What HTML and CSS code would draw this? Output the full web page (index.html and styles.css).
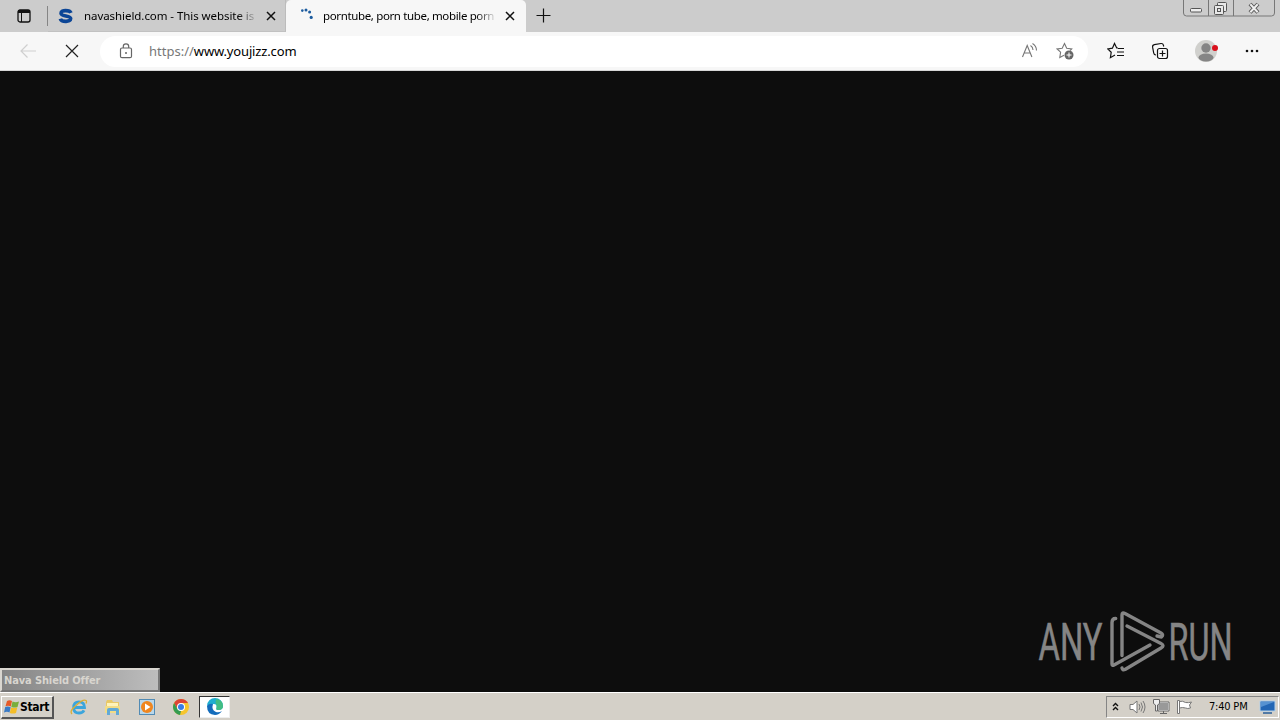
FILE: index.html
```html
<!DOCTYPE html>
<html lang="en">
<head>
<meta charset="utf-8">
<title>Desktop</title>
<link rel="stylesheet" href="styles.css">
</head>
<body>
<div class="screen">
  <header class="tabstrip">
    <svg class="tab-actions" width="16" height="16" viewBox="0 0 16 16"><rect x="2" y="2" width="12" height="12" rx="2" fill="none" stroke="#111" stroke-width="1.3"/><path d="M2 3.500h12" stroke="#111" stroke-width="3"/><path d="M5.500 5v9" stroke="#111"/></svg>
    <span class="divider"></span>
    <div class="tab">
      <svg class="fav" width="16" height="16" viewBox="0 0 16 16"><path d="M13 4.900C11.800 2 3 1.600 3 5.200c0 3.600 9.700 1.800 9.700 5.400 0 3.900-9.400 3.400-10.400.1" fill="none" stroke="#0b4596" stroke-width="3.600"/></svg>
      <span class="title t1">navashield.com - This website is</span>
      <svg class="close" width="10" height="10" viewBox="0 0 10 10"><path d="M1 1l8 8M9 1l-8 8" stroke="#111" stroke-width="1.5"/></svg>
    </div>
    <div class="tab active">
      <svg class="fav" width="16" height="16" viewBox="0 0 16 16" fill="#1c5c9f"><circle cx="3.300" cy="2.600" r="1.300"/><circle cx="7" cy="1.900" r="1.500"/><circle cx="10.600" cy="4" r="1.500"/><circle cx="12.200" cy="9.400" r="1.600"/></svg>
      <span class="title t2">porntube, porn tube, mobile porn</span>
      <svg class="close" width="10" height="10" viewBox="0 0 10 10"><path d="M1 1l8 8M9 1l-8 8" stroke="#111" stroke-width="1.5"/></svg>
    </div>
    <svg class="plus" width="15" height="15" viewBox="0 0 15 15"><path d="M7.5 .5v14M.5 7.500h14" stroke="#111" stroke-width="1.2"/></svg>
    <svg class="winbtns" width="94" height="18" viewBox="0 0 94 18"><path d="M1.500 0v13q0 3 3 3h85q3 0 3-3V0M26.500 0v16M51.500 0v16" fill="none" stroke="#777"/><rect x="8.500" y="8.500" width="11" height="3.500" rx="1" fill="#eee" stroke="#555"/><g fill="#e8e8e8" stroke="#555"><rect x="35.500" y="2.500" width="9" height="9" rx="1"/><rect x="32.500" y="5.500" width="9" height="9" rx="1"/><rect x="35.500" y="8.500" width="3" height="3"/></g><path d="M68 4l8 8.500M76 4l-8 8.500" stroke="#555" stroke-width="4"/><path d="M68.300 4.300l7.400 7.900M75.700 4.300l-7.400 7.900" stroke="#eee" stroke-width="2"/></svg>
  </header>
  <div class="toolbar">
    <svg class="back" width="18" height="16" viewBox="0 0 18 16"><path d="M17 8H2M8.500 1.500L2 8l6.500 6.500" fill="none" stroke="#cfcfcf" stroke-width="1.200"/></svg>
    <svg class="stop" width="14" height="14" viewBox="0 0 14 14"><path d="M1 1l12 12M13 1L1 13" stroke="#222" stroke-width="1.200"/></svg>
    <div class="address">
      <svg class="lock" width="14" height="16" viewBox="0 0 14 16"><rect x="1.500" y="5" width="11" height="9.700" rx="1.500" fill="none" stroke="#666" stroke-width="1.200"/><path d="M4.300 5V3.500a2.700 2.700 0 015.400 0V5" fill="none" stroke="#666" stroke-width="1.200"/><circle cx="7" cy="10" r="1" fill="#666"/></svg>
      <span class="url"><span class="scheme">https://</span>www.youjizz.com</span>
      <svg class="read" width="17" height="16" viewBox="0 0 17 16" fill="none" stroke="#777" stroke-width="1.100"><path d="M1.500 14L6.200 2.500l4.700 11.500M3.200 10h6M9.500 2.500q2.500 1.500 2.500 4.500M11.500 .5q4 2.500 4 7"/></svg>
      <svg class="addfav" width="18" height="18" viewBox="0 0 18 18"><path d="M8 13.200l-4.200 2.300.8-5.300L1.200 7l5-.7 2.300-4.800 2.200 4.800 5 .7-1.500 1.500" fill="none" stroke="#777" stroke-width="1.100"/><circle cx="13" cy="13" r="4.500" fill="#666"/><path d="M10.500 13h5M13 10.500v5" stroke="#fff"/></svg>
    </div>
    <svg class="favs" width="18" height="18" viewBox="0 0 18 18" fill="none" stroke="#111" stroke-width="1.200"><path d="M11 6H9.700L7.500 1.500 5.400 6.200l-4.600.7 3.400 3.400-.8 5.400L8 13M11 6.500h6M10 10h7M10 13.500h7"/></svg>
    <svg class="coll" width="18" height="18" viewBox="0 0 18 18" fill="none" stroke="#111" stroke-width="1.200"><rect x="6.500" y="6.500" width="10" height="10" rx="2"/><path d="M11.500 8.500v6M8.500 11.500h6M5 13q-2 0-2.300-2L1.600 5.200Q1.300 3 3.300 2.600L10 1.500q2-.2 2.400 1.700l.3 1.300"/></svg>
    <svg class="avatar" width="24" height="24" viewBox="0 0 24 24"><circle cx="12" cy="12" r="11" fill="#d0d0cd"/><circle cx="12" cy="9" r="4.700" fill="#858585"/><ellipse cx="12" cy="18.500" rx="7.500" ry="4" fill="#858585"/><circle cx="21" cy="9" r="3" fill="#d9101c"/></svg>
    <svg class="more" width="14" height="4" viewBox="0 0 14 4" fill="#111"><circle cx="2" cy="2" r="1.300"/><circle cx="7" cy="2" r="1.300"/><circle cx="12" cy="2" r="1.300"/></svg>
  </div>
  <main class="page">
    <svg class="watermark" width="200" height="70" viewBox="0 0 200 70">
      <g class="logo-text"><text x="2.500" y="54" textLength="64" lengthAdjust="spacingAndGlyphs">ANY</text><text x="132.500" y="54" textLength="64" lengthAdjust="spacingAndGlyphs">RUN</text></g>
      <g fill="none" stroke="#858585" stroke-width="3.400" stroke-linejoin="round" stroke-linecap="round"><path d="M79.700 12.500q-3.700 0-3.700 4V58q0 2 2 1l36-20"/><path d="M86 49.500V9q0-3 3-1.500l36 19.500q3 2 .5 4l-4.500-1"/><path d="M91 20l34 17.500q4 2 0 4.500L89 63.500q-2.500 1-3-1.500"/></g>
    </svg>
    <div class="offer">Nava Shield Offer</div>
  </main>
  <footer class="taskbar">
    <div class="start"><svg width="16" height="16" viewBox="0 0 16 16"><path d="M3 2q2.500-1.500 5 0L6.800 7.500q-2.600-1.500-5.300-.2z" fill="#e65a27"/><path d="M8.500 2.500q3 1.300 6.500 0L13.500 8q-2.500 1-6.200 0z" fill="#79ae3b"/><path d="M1.200 8q2.600-1 5.500.2L5.500 13.500q-2.500-1.300-5.500 0z" fill="#3a7bc6"/><path d="M7.100 8.500q3 1.200 6.200 0L12 14q-3 1.200-6.200 0z" fill="#f4bd27"/></svg><span>Start</span></div>
    <svg class="app a1" width="18" height="18" viewBox="0 0 18 18"><path d="M4 9.500h10.500q0-5.700-5.500-5.700T3.700 9.700q0 5.300 5.300 5.300 3.700 0 5-2.700" fill="none" stroke="#3ba5dc" stroke-width="2.800"/><path d="M2 16q-3-3 4-8.500Q13 1 16 2.500q1 .5 0 3" fill="none" stroke="#dcae34" stroke-width="1.300"/></svg>
    <svg class="app a2" width="18" height="18" viewBox="0 0 18 18"><path d="M2 4l1-2h5l1 2h6v11H2z" fill="#e8c866"/><path d="M3 5h11v3H3z" fill="#fff3b9"/><path d="M1 8h15v7H1z" fill="#f2dc86"/><path d="M3 17v-5q0-2 2-2h8q2 0 2 2v5h-3v-4H6v4z" fill="#62a9d6"/></svg>
    <svg class="app a3" width="18" height="18" viewBox="0 0 18 18"><rect x="1.500" y="1.500" width="15" height="15" fill="#b9d7ea" stroke="#528bb4"/><circle cx="9" cy="9" r="6" fill="#ef861f"/><path d="M7 5.500v7L12.500 9z" fill="#fff"/></svg>
    <svg class="app a4" width="18" height="18" viewBox="0 0 18 18"><circle cx="9" cy="9" r="8" fill="#f6c52c"/><path d="M2.100 5A8 8 0 0116 5H9L5.500 11z" fill="#dc4436"/><path d="M2.100 5l3.400 6L9 13l-1 4A8 8 0 012.100 5" fill="#349c52"/><circle cx="9" cy="9" r="4" fill="#fff"/><circle cx="9" cy="9" r="3" fill="#397de6"/></svg>
    <div class="running"><svg width="18" height="18" viewBox="0 0 18 18"><path d="M1 8a8 8 0 0116 0q0 4-4.500 4-3 0-2-2 1-4-3-4Q3 6 1 8" fill="#20aed0"/><path d="M10 1.100Q17 2 17 8q0 4-4.500 4-3 0-2-2 1-3-1-5z" fill="#42bd83"/><path d="M1 8q2-3 6-2-2 6 3 8 3 1 6-1-3 4-7 4-8-.5-8-9" fill="#146cbb"/></svg></div>
    <div class="tray">
      <svg class="chev" width="7" height="10" viewBox="0 0 7 10"><path d="M1 4l2.500-2.500L6 4M1 8l2.500-2.500L6 8" fill="none" stroke="#111" stroke-width="1.400"/></svg>
      <svg class="snd" width="17" height="16" viewBox="0 0 17 16" fill="none" stroke="#777"><path d="M1 5.500h3L8 2v12l-4-3.500H1z" fill="#fff"/><path d="M10 5q2 3 0 6M12 3.500q3 4.500 0 9M14 2q4 6 0 12"/></svg>
      <svg class="net" width="17" height="17" viewBox="0 0 17 17"><rect x="5.500" y="4.500" width="10" height="8" fill="#999" stroke="#fff"/><path d="M5 4h11v9H5zM7 15.500h7M10.500 13v2" fill="none" stroke="#666"/><path d="M.5 1.500h6v4l-2 1.500v6h-2V7l-2-1.500z" fill="#eee" stroke="#666"/></svg>
      <svg class="flag" width="16" height="16" viewBox="0 0 16 16"><path d="M.5 1.500h2v13h-2zM2.500 2.500q3-1 6 1 3 .5 6-.5l-2 3 1 3q-3 1-5 0-3-1-6 0z" fill="#fff" stroke="#777"/></svg>
      <span class="clock">7:40 PM</span>
      <svg class="desk" width="17" height="16" viewBox="0 0 17 16"><path d="M1 2h15v10H1z" fill="#2366b4" stroke="#b5d1e9"/><path d="M2 3h13L2 8z" fill="#5692d1"/><path d="M4 14h9" stroke="#527aa5" stroke-width="2"/></svg>
    </div>
  </footer>
</div>
</body>
</html>
```
FILE: styles.css
```css
* { box-sizing: border-box; }
body { margin: 0; overflow: hidden; }
svg { display: block; flex: none; }
.screen { width: 1280px; height: 720px; display: flex; flex-direction: column; background: #0d0d0d; font-family: "Noto Sans", "Open Sans", sans-serif; }
.tabstrip { height: 32px; display: flex; background: #ccc; flex: none; }
.tab-actions { margin: 8px 0 0 16px; }
.divider { width: 1px; height: 20px; margin: 6px 0 0 15px; background: #858585; }
.tab { width: 238px; height: 32px; display: flex; align-items: center; padding-left: 10px; border-bottom: 1px solid #c1c1c1; border-right: 1px solid #bcbcbc; }
.tab.active { width: 240px; background: #f7f7f7; border: 0; border-radius: 5px 5px 0 0; padding-left: 13px; }
.title { display: block; width: 174px; height: 18px; margin-left: 10px; white-space: nowrap; font-size: 11.5px; line-height: 18px; letter-spacing: -.06px; color: #000; -webkit-mask-image: linear-gradient(90deg, #000 88%, transparent); mask-image: linear-gradient(90deg, #000 88%, transparent); }
.tab:not(.active) .close { margin-left: 8px; }
.active .title { width: 174px; margin-left: 8px; letter-spacing: -.36px; }
.active .close { margin-left: 8px; }
.plus { margin: 8px 0 0 10px; }
.winbtns { margin-left: auto; margin-right: 4px; }
.toolbar { height: 39px; display: flex; align-items: center; background: #f7f7f7; border-bottom: 1px solid #d6d6d6; flex: none; }
.back { margin-left: 19px; }
.stop { margin-left: 28px; }
.address { width: 988px; height: 31px; margin-left: 21px; display: flex; align-items: center; background: #fff; border-radius: 16px; padding: 0 14px 0 19px; }
.url { margin-left: 16px; font-size: 13px; letter-spacing: -.15px; color: #000; line-height: 20px; }
.scheme { color: #777; letter-spacing: 0; }
.read { margin-left: auto; }
.addfav { margin-left: 18px; }
.favs { margin-left: 19px; }
.coll { margin-left: 26px; }
.avatar { margin-left: 25px; }
.more { margin-left: 27px; }
.page { height: 621px; position: relative; background: #0d0d0d; flex: none; }
.watermark { position: absolute; left: 1036px; top: 535px; overflow: visible; }
.logo-text { font-family: Roboto, sans-serif; font-size: 52px; fill: #858585; stroke: #858585; stroke-width: .6px; }
.offer { position: absolute; left: 0; bottom: 0; width: 160px; height: 24px; padding: 1px 0 0 2px; border: 2px solid #d9d6d0; border-right-color: #777; border-bottom-color: #777; background: linear-gradient(90deg, #858585, #bdbdbd); color: #d8d5cf; font: bold 11px/19px "DejaVu Sans Condensed", "DejaVu Sans", sans-serif; letter-spacing: -.12px; white-space: nowrap; }
.taskbar { height: 28px; display: flex; align-items: center; background: #d4d0c8; border-top: 1px solid #fff; flex: none; }
.start { width: 53px; height: 23px; margin: 1px 0 0 1px; display: flex; align-items: center; padding-left: 2px; border: 1px solid #fff; border-right: 2px solid #555; border-bottom: 2px solid #555; font: bold 12px "DejaVu Sans Condensed", sans-serif; letter-spacing: -.35px; }
.a1 { margin-left: 16px; }
.a2, .a3, .a4 { margin-left: 16px; }
.running { width: 31px; height: 22px; margin-left: 9px; padding: 1px 0 0 6px; background: #fff; border: 1px solid #333; border-right-color: #eee; border-bottom-color: #eee; }
.tray { width: 173px; height: 22px; margin-left: auto; margin-right: 1px; display: flex; align-items: center; border: 1px solid #858585; border-right-color: #fff; border-bottom-color: #fff; padding-left: 5px; }
.snd { margin-left: 10px; }
.net { margin-left: 7px; }
.flag { margin-left: 7px; }
.clock { width: 50px; margin-left: 16px; font: 11px "DejaVu Sans Condensed", sans-serif; letter-spacing: -.2px; white-space: nowrap; }
.desk { margin-left: 0; }
```
